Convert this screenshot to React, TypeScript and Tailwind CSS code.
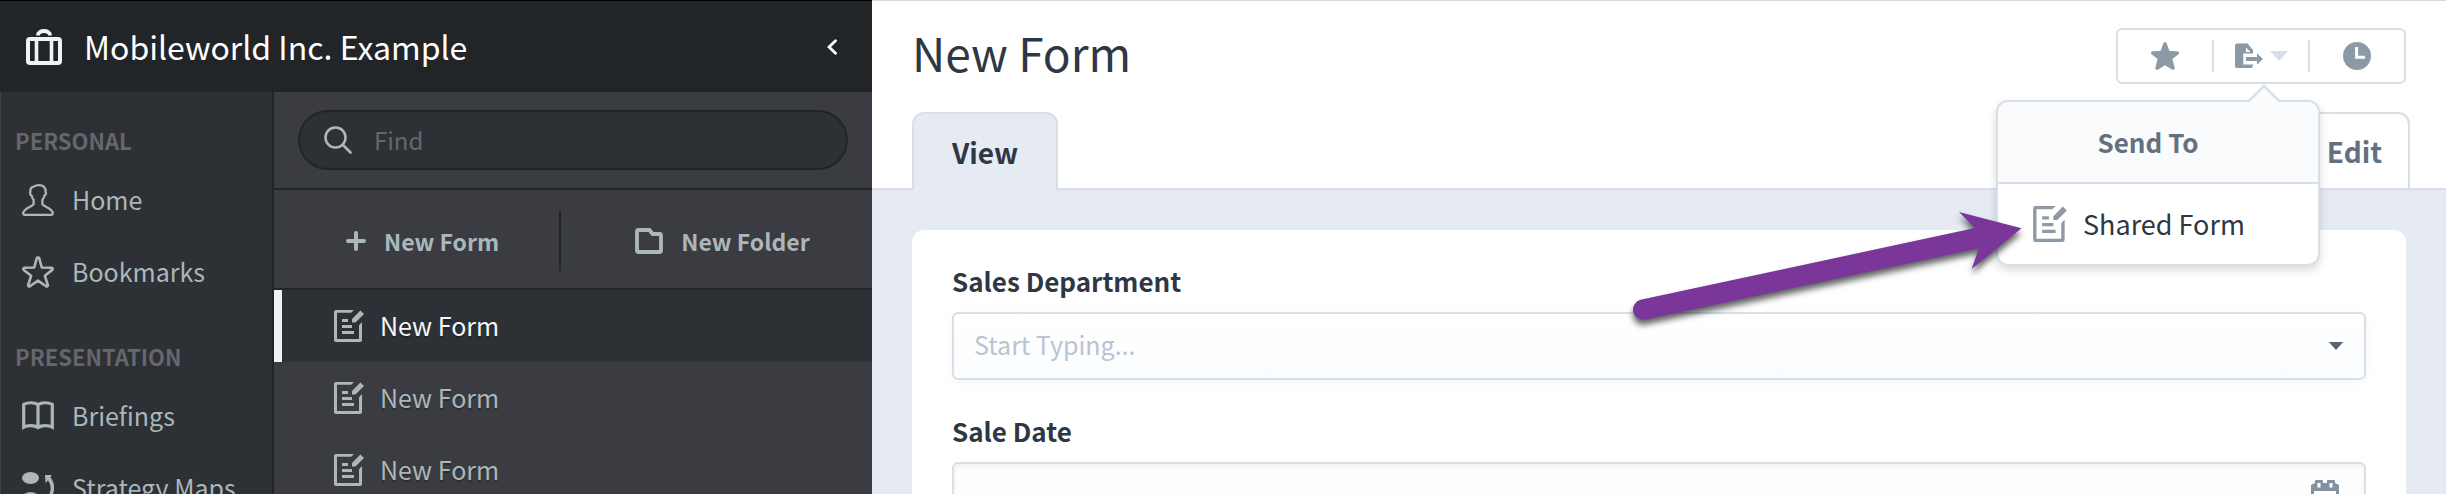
import React from 'react';
import { clsx } from 'clsx';

type IconProps = { className?: string };

const SuitcaseIcon = ({ className }: IconProps) => (
  <svg viewBox="0 0 36 36" className={className} fill="none" stroke="currentColor" aria-hidden="true">
    <rect x="2" y="10" width="32" height="24" rx="2" strokeWidth="4" />
    <path d="M10.500 10v24M25.500 10v24" strokeWidth="3.600" />
    <path d="M12 6.500c0-6 12-6 12 0" strokeWidth="3.800" />
  </svg>
);

const PersonIcon = ({ className }: IconProps) => (
  <svg viewBox="0 0 32 32" className={className} fill="none" stroke="currentColor" strokeWidth="2.300" strokeLinejoin="round" aria-hidden="true">
    <path d="M17 1.200c-2.500 0-4 .6-5.200 1.400-2.600.4-3.800 2-3.400 5.400-.9 1 .1 3.300 1.200 3.600.3 2 1 3.100 2 4.200v4.600c-.9 2.300-10.400 3.400-10.400 9.200 0 .8.500 1.200 1.300 1.200h27c.8 0 1.300-.4 1.300-1.200 0-5.800-9.500-6.900-10.400-9.200v-4.600c1-1.100 1.700-2.200 2-4.200 1.100-.3 2.100-2.600 1.200-3.600.5-4.800-2.600-6.800-6.600-6.800Z" />
  </svg>
);

const StarOutlineIcon = ({ className }: IconProps) => (
  <svg viewBox="0 0 32 32" className={className} fill="none" stroke="currentColor" strokeWidth="2.600" strokeLinejoin="round" aria-hidden="true">
    <path d="M14.800 2.200c.5-1 1.900-1 2.400 0l2.600 9.300 9.700.3c1.200.1 1.600 1.400.7 2.100l-7.300 5.900 2.900 9.200c.3 1.100-.8 1.900-1.700 1.300L16 24.600l-8.100 5.700c-.9.600-2-.2-1.700-1.300l2.900-9.200-7.300-5.900c-.9-.7-.5-2 .7-2.100l9.700-.3Z" />
  </svg>
);

const BookIcon = ({ className }: IconProps) => (
  <svg viewBox="0 0 32 32" className={className} fill="none" stroke="currentColor" strokeWidth="3.200" aria-hidden="true">
    <path d="M16 4.600C12.500 2.200 6 2.200 1.700 4.400v22.800c4-2.200 10.800-2.200 14.300.4 3.500-2.600 10.300-2.600 14.300-.4V4.400C26 2.200 19.500 2.200 16 4.600Zm0 0v23" />
  </svg>
);

const StrategyIcon = ({ className }: IconProps) => (
  <svg viewBox="0 0 32 32" className={className} fill="currentColor" aria-hidden="true">
    <ellipse cx="8.500" cy="6" rx="8.500" ry="6" />
    <ellipse cx="8.500" cy="26" rx="8.500" ry="6" />
    <path d="M23 3h6.500l-1 2.500c5 6 5 15-.5 21l-2-1.500c3.500-6 3.500-12 0-16.500L23.500 11Z" />
  </svg>
);

const FormIcon = ({ className }: IconProps) => (
  <svg viewBox="0 0 30 32" className={className} fill="currentColor" aria-hidden="true">
    <path d="M2 0h18l-2.800 2.800H3V29h22V15.300l3-3.300v18a2 2 0 0 1-2 2H2a2 2 0 0 1-2-2V2a2 2 0 0 1 2-2Z" />
    <path d="M8 9h6v3H8zM8 15h10v3H8zM8 21h12v3H8z" />
    <path d="M18 12.500V9L26.400.5 30 4l-8.500 8.500Z" />
  </svg>
);

const FolderIcon = ({ className }: IconProps) => (
  <svg viewBox="0 0 28 26" className={className} fill="none" stroke="currentColor" strokeWidth="3.800" strokeLinejoin="round" aria-hidden="true">
    <path d="M2 3.500V22.500a1.500 1.500 0 0 0 1.500 1.500h21a1.500 1.500 0 0 0 1.500-1.500V7.500A1.500 1.500 0 0 0 24.500 6H17.500L14.500 2H3.500A1.500 1.500 0 0 0 2 3.500Z" />
  </svg>
);

const PlusIcon = ({ className }: IconProps) => (
  <svg viewBox="0 0 20 20" className={className} stroke="currentColor" strokeWidth="4" strokeLinecap="round" aria-hidden="true">
    <path d="M10 2v16M2 10h16" />
  </svg>
);

const SearchIcon = ({ className }: IconProps) => (
  <svg viewBox="0 0 28 28" className={className} fill="none" stroke="currentColor" strokeWidth="2.600" strokeLinecap="round" aria-hidden="true">
    <circle cx="11.500" cy="11.500" r="10" />
    <path d="m19 19 7.500 7.500" />
  </svg>
);

const ChevronLeftIcon = ({ className }: IconProps) => (
  <svg viewBox="0 0 10 16" className={className} fill="none" stroke="currentColor" strokeWidth="2.800" strokeLinecap="round" aria-hidden="true">
    <path d="M8.500 1.800 2 8l6.500 6.200" />
  </svg>
);

const StarIcon = ({ className }: IconProps) => (
  <svg viewBox="0 0 28 28" className={className} fill="currentColor" aria-hidden="true">
    <path d="M12.500 1c.6-1.300 2.400-1.300 3 0l3 8 7.800.2c1.700.1 2.300 1.900 1.100 3l-6 4.900 2.200 8.300c.4 1.700-1.200 2.900-2.700 2L14 23.300l-6.900 4.100c-1.500.9-3.100-.3-2.700-2l2.200-8.300-6-4.900c-1.200-1.100-.6-2.900 1.100-3L9.500 9Z" />
  </svg>
);

const ExportIcon = ({ className }: IconProps) => (
  <svg viewBox="0 0 28 26" className={className} fill="currentColor" aria-hidden="true">
    <path d="M2 .5h10.500L18 7v3.500H8.300v11H18c0 2-.7 3.500-2 3.500H2a2 2 0 0 1-2-2V2.500a2 2 0 0 1 2-2Zm9 4V9h4.500Z" fillRule="evenodd" />
    <path d="M11 14h11v-3.700l6 5.700-6 5.700V18H11Z" />
  </svg>
);

const ClockIcon = ({ className }: IconProps) => (
  <svg viewBox="0 0 28 28" className={className} aria-hidden="true">
    <circle cx="14" cy="14" r="14" fill="currentColor" />
    <path d="M13.600 5v10.300H22" fill="none" stroke="white" strokeWidth="3" />
  </svg>
);

const CaretDownIcon = ({ className }: IconProps) => (
  <svg viewBox="0 0 18 10" className={className} fill="currentColor" aria-hidden="true">
    <path d="M0 0h18L9 10Z" />
  </svg>
);

const CalendarIcon = ({ className }: IconProps) => (
  <svg viewBox="0 0 28 30" className={className} aria-hidden="true">
    <path d="M4 2V1a1 1 0 0 1 1-1h6a1 1 0 0 1 1 1v2h4V1a1 1 0 0 1 1-1h6a1 1 0 0 1 1 1v2l4 2v25H0V5l4-2Z" fill="#8391a0" />
    <path d="M6.500 3h3v4.500h-3zM18.500 3h3v4.500h-3zM3 11h22v16H3z" fill="white" />
  </svg>
);

const navSections = [
  {
    title: 'PERSONAL',
    items: [
      { label: 'Home', Icon: PersonIcon },
      { label: 'Bookmarks', Icon: StarOutlineIcon },
    ],
  },
  {
    title: 'PRESENTATION',
    items: [
      { label: 'Briefings', Icon: BookIcon },
      { label: 'Strategy Maps', Icon: StrategyIcon },
    ],
  },
];

const forms = [
  { id: 1, name: 'New Form', active: true },
  { id: 2, name: 'New Form', active: false },
  { id: 3, name: 'New Form', active: false },
];

const PrimaryNav = () => (
  <nav className="w-[274px] shrink-0 border-r-2 border-l border-r-[#212529] border-l-[#3e4246] bg-[#2d3035]">
    {navSections.map((section) => (
      <div key={section.title}>
        <h2 className="pt-[26px] pb-[2px] pl-[14px] text-[22px] leading-11 font-bold text-[#65676d]">{section.title}</h2>
        {section.items.map(({ label, Icon }) => (
          <a key={label} href="#" className="flex h-[72px] items-center gap-[18px] pl-[21px] text-[25px] whitespace-nowrap">
            <Icon className="size-8 shrink-0" />
            {label}
          </a>
        ))}
      </div>
    ))}
  </nav>
);

const FormList = () => (
  <div className="min-w-0 flex-1 bg-[#3a3c41]">
    <div className="border-b-2 border-[#212529] px-6 py-[18px]">
      <label className="flex h-[60px] items-center gap-[22px] rounded-full border-2 border-[#212529] bg-[#2d3035] px-6">
        <SearchIcon className="size-7 shrink-0" />
        <input
          type="text"
          aria-label="Find"
          placeholder="Find"
          className="min-w-0 flex-1 bg-transparent text-2xl outline-none placeholder:text-[#65676d]"
        />
      </label>
    </div>

    <div className="flex h-[100px] items-center border-b-2 border-[#212529] pt-1 text-[23px] font-bold">
      <button type="button" className="flex h-[60px] w-[287px] items-center justify-center gap-[18px] border-r-2 border-[#212529] pl-3">
        <PlusIcon className="size-5" />
        New Form
      </button>
      <button type="button" className="flex h-[60px] flex-1 items-center justify-center gap-[18px] pl-3">
        <FolderIcon className="h-[26px] w-7" />
        New Folder
      </button>
    </div>

    <ul>
      {forms.map((form) => (
        <li key={form.id}>
          <a
            href="#"
            className={clsx(
              'flex h-[72px] items-center gap-4 border-l-8 pl-[52px] text-[25px] [text-shadow:0_2px_0_#00000040]',
              form.active ? 'border-[#eff3f8] bg-[#2d3035]' : 'border-transparent'
            )}
          >
            <FormIcon className="h-8 w-[30px]" />
            <span className={form.active ? 'text-[#f3f6fa]' : undefined}>{form.name}</span>
          </a>
        </li>
      ))}
    </ul>
  </div>
);

const PointerArrow = () => (
  <svg
    viewBox="1620 190 420 150"
    className="pointer-events-none absolute top-[88px] right-[278px] h-[150px] w-[420px] max-w-none drop-shadow-[0_5px_3px_#000000a0]"
    fill="#7a3699"
    aria-hidden="true"
  >
    <path d="M1640.500 299.800 1975 228 1959 212l62.500 16.300L1971.700 269l7.300-20.700L1644 319.800a10.200 10.200 0 0 1-3.500-20Z" />
  </svg>
);

const SendToMenu = () => (
  <div className="absolute top-[72px] right-[86px] z-10 w-[324px] rounded-xl border-2 border-[#d8dfe9] bg-white shadow-[0_4px_10px_#00000026]">
    <svg viewBox="0 0 32 18" className="absolute -top-[18px] right-[38px] h-[18px] w-8" aria-hidden="true">
      <path d="M0 18 16 2l16 16" fill="#fafbfd" stroke="#d8dfe9" strokeWidth="2.400" />
    </svg>
    <div className="rounded-t-xl border-b-2 border-[#d8dfe9] bg-[#fafbfd] pr-5 text-center text-[26px] leading-[80px] font-bold text-[#627080]">
      Send To
    </div>
    <button type="button" className="flex h-20 w-full items-center gap-4 pl-[35px] text-[27px] text-[#2e3744]">
      <FormIcon className="h-9 w-[34px] text-[#8c9aa8]" />
      Shared Form
    </button>
    <PointerArrow />
  </div>
);

const Toolbar = () => (
  <div className="relative">
    <div className="flex h-14 w-[290px] items-center rounded-md border-2 border-[#d8dfe9] text-[#8c9aa8]">
      <button type="button" aria-label="Bookmark" className="flex h-8 flex-1 items-center justify-center">
        <StarIcon className="size-7" />
      </button>
      <button
        type="button"
        aria-label="Send to"
        className="flex h-8 w-[98px] items-center justify-center gap-[7px] border-x-2 border-[#d8dfe9]"
      >
        <ExportIcon className="h-[26px] w-7" />
        <CaretDownIcon className="h-[10px] w-[18px] text-[#d8dfe9]" />
      </button>
      <button type="button" aria-label="History" className="flex h-8 flex-1 items-center justify-center">
        <ClockIcon className="size-7" />
      </button>
    </div>
    <SendToMenu />
  </div>
);

const labelClass = 'block pb-3 text-[26px] leading-[38px] font-bold';

const fieldClass =
  'h-[68px] w-full rounded-md border-2 border-[#d8dfe9] bg-linear-to-b from-white to-[#fafcfe] pr-20 pb-1 pl-5 text-[25px] outline-none placeholder:text-[#b9c4d2]';

const App = () => {
  return (
    <div className="flex h-screen overflow-hidden bg-white font-['Noto_Sans_CJK_SC',sans-serif] text-[#2e3744]">
      <aside className="flex w-[872px] shrink-0 flex-col border-t border-black text-[#abb7b9]">
        <header className="flex h-[91px] shrink-0 items-center bg-[#212528] pr-[35px] pl-[26px] text-white">
          <SuitcaseIcon className="size-9 text-[#eff3f8]" />
          <h1 className="flex-1 pb-[2px] pl-[22px] text-[32px] leading-10">Mobileworld Inc. Example</h1>
          <button type="button" aria-label="Collapse sidebar">
            <ChevronLeftIcon className="h-4 w-[10px]" />
          </button>
        </header>
        <div className="flex min-h-0 flex-1">
          <PrimaryNav />
          <FormList />
        </div>
      </aside>

      <main className="flex min-w-0 flex-1 flex-col border-t border-[#d8d8d8]">
        <div className="flex h-[111px] shrink-0 items-start justify-between px-10 pt-[27px]">
          <h2 className="text-[46px] leading-[48px]">New Form</h2>
          <Toolbar />
        </div>

        <div className="flex h-[78px] shrink-0 justify-between border-b-2 border-[#d8dfe9] pr-9 pl-10 text-[28px] font-bold">
          <button type="button" className="-mb-[2px] rounded-t-xl border-2 border-b-0 border-[#d8dfe9] bg-[#e5eaf3] px-[38px]">
            View
          </button>
          <button type="button" className="rounded-t-xl border-2 border-b-0 border-[#d8dfe9] pr-[26px] pl-[38px] text-[#627080]">
            Edit
          </button>
        </div>

        <div className="min-h-0 flex-1 bg-[#e5eaf3] px-10 pt-10">
          <form className="flex h-full flex-col gap-8 rounded-t-xl bg-white px-10 pt-8">
            <div>
              <label htmlFor="department" className={labelClass}>
                Sales Department
              </label>
              <div className="relative">
                <input id="department" type="text" placeholder="Start Typing..." className={clsx(fieldClass, 'shadow-[0_2px_8px_#0000000a]')} />
                <CaretDownIcon className="absolute top-[30px] right-[22px] h-2 w-4 text-[#5c6375]" />
              </div>
            </div>
            <div>
              <label htmlFor="date" className={labelClass}>
                Sale Date
              </label>
              <div className="relative">
                <input id="date" type="text" className={clsx(fieldClass, 'shadow-[inset_0_2px_6px_#00000012]')} />
                <CalendarIcon className="absolute top-[18px] right-[27px] h-[30px] w-7" />
              </div>
            </div>
          </form>
        </div>
      </main>
    </div>
  );
};

export default App;
